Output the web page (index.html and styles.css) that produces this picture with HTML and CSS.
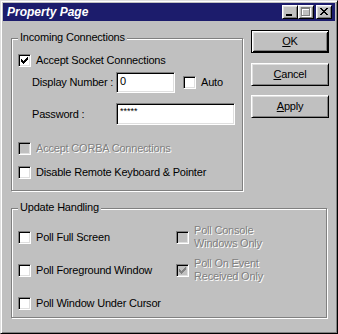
FILE: index.html
```html
<!DOCTYPE html>
<html>
<head>
<meta charset="utf-8">
<link rel="stylesheet" href="styles.css">
</head>
<body>
<div class="window">
  <div class="titlebar">
    <span class="title">Property Page</span>
    <div class="tb-btns">
      <span class="tb-btn"><svg width="14" height="12" viewBox="0 0 14 12" shape-rendering="crispEdges"><rect x="3" y="8" width="6" height="2" fill="#000"/></svg></span>
      <span class="tb-btn"><svg width="14" height="12" viewBox="0 0 14 12" shape-rendering="crispEdges"><g fill="#fff" transform="translate(1,1)"><rect x="2" y="1" width="9" height="2"/><rect x="2" y="1" width="1" height="9"/><rect x="10" y="1" width="1" height="9"/><rect x="2" y="9" width="9" height="1"/></g><g fill="#808080"><rect x="2" y="1" width="9" height="2"/><rect x="2" y="1" width="1" height="9"/><rect x="10" y="1" width="1" height="9"/><rect x="2" y="9" width="9" height="1"/></g></svg></span>
      <span class="tb-btn close"><svg width="14" height="12" viewBox="0 0 14 12" shape-rendering="crispEdges"><path transform="translate(3,2)" fill="#000" d="M0 0h2v1h-2z M6 0h2v1h-2z M1 1h2v1h-2z M5 1h2v1h-2z M2 2h4v1h-4z M3 3h2v1h-2z M2 4h4v1h-4z M1 5h2v1h-2z M5 5h2v1h-2z M0 6h2v1h-2z M6 6h2v1h-2z"/></svg></span>
    </div>
  </div>
  <div class="content">
    <div class="top">
      <div class="group g1">
        <span class="legend">Incoming Connections</span>
        <div class="cb-row">
          <span class="cb"><svg width="7" height="7" viewBox="0 0 7 7" shape-rendering="crispEdges"><path fill="#000" d="M0 2h1v3h-1z M1 3h1v3h-1z M2 4h1v3h-1z M3 3h1v3h-1z M4 2h1v3h-1z M5 1h1v3h-1z M6 0h1v3h-1z"/></svg></span>
          <span>Accept Socket Connections</span>
        </div>
        <div class="field-row r-display">
          <span class="flabel">Display Number :</span>
          <div class="field f-display">0</div>
          <div class="cb-row auto">
            <span class="cb"></span>
            <span>Auto</span>
          </div>
        </div>
        <div class="field-row r-password">
          <span class="flabel">Password :</span>
          <div class="field f-password">*****</div>
        </div>
        <div class="cb-row r-corba disabled">
          <span class="cb"></span>
          <span>Accept CORBA Connections</span>
        </div>
        <div class="cb-row r-disable">
          <span class="cb"></span>
          <span>Disable Remote Keyboard &amp; Pointer</span>
        </div>
      </div>
      <div class="buttons">
        <div class="btn default"><span><u>O</u>K</span></div>
        <div class="btn b-cancel"><span><u>C</u>ancel</span></div>
        <div class="btn b-apply"><span><u>A</u>pply</span></div>
      </div>
    </div>
    <div class="group g2">
      <span class="legend">Update Handling</span>
      <div class="grid">
        <div class="cell">
          <span class="cb"></span>
          <span>Poll Full Screen</span>
        </div>
        <div class="cell disabled">
          <span class="cb"></span>
          <span>Poll Console<br>Windows Only</span>
        </div>
        <div class="cell">
          <span class="cb"></span>
          <span>Poll Foreground Window</span>
        </div>
        <div class="cell disabled">
          <span class="cb"><svg width="7" height="7" viewBox="0 0 7 7" shape-rendering="crispEdges"><path fill="#808080" d="M0 2h1v3h-1z M1 3h1v3h-1z M2 4h1v3h-1z M3 3h1v3h-1z M4 2h1v3h-1z M5 1h1v3h-1z M6 0h1v3h-1z"/></svg></span>
          <span>Poll On Event<br>Received Only</span>
        </div>
        <div class="cell">
          <span class="cb"></span>
          <span>Poll Window Under Cursor</span>
        </div>
      </div>
    </div>
  </div>
</div>
</body>
</html>
```
FILE: styles.css
```css
body {
  margin: 0;
}

.window {
  width: 338px;
  height: 334px;
  box-sizing: border-box;
  background: #c0c0c0;
  border: 1px solid;
  border-color: #dfdfdf #000 #000 #dfdfdf;
  box-shadow: inset 1px 1px #fff, inset -1px -1px #808080;
  padding: 2px;
  font-family: "Liberation Sans", Arial, sans-serif;
  font-size: 11px;
  letter-spacing: -0.2px;
  line-height: 13px;
  color: #000;
  display: flex;
  flex-direction: column;
}

.titlebar {
  height: 18px;
  background: #1c1c6c;
  display: flex;
  align-items: center;
  padding: 0 3px 0 4px;
  color: #fff;
}

.title {
  flex: 1;
  font-style: italic;
  font-weight: bold;
  font-size: 12px;
  letter-spacing: 0;
}

.tb-btns {
  display: flex;
}

.tb-btn {
  width: 16px;
  height: 14px;
  box-sizing: border-box;
  background: #c0c0c0;
  border: 1px solid;
  border-color: #fff #000 #000 #fff;
  box-shadow: inset 1px 1px #dfdfdf, inset -1px -1px #808080;
  display: block;
}

.tb-btn svg {
  display: block;
}

.tb-btn.close {
  margin-left: 2px;
}

.content {
  padding: 0 6px 0 8px;
  display: flex;
  flex-direction: column;
}

.top {
  display: flex;
  align-items: flex-start;
  gap: 8px;
}

.group {
  position: relative;
  border: 1px solid #808080;
  box-shadow: inset 1px 1px #fff, 1px 1px #fff;
  box-sizing: border-box;
}

.legend {
  position: absolute;
  left: 6px;
  top: -8px;
  padding: 0 2px;
  background: #c0c0c0;
  line-height: 13px;
}

.g1 {
  width: 232px;
  height: 153px;
  margin-top: 17px;
  padding: 15px 0 0 6px;
}

.cb-row {
  display: flex;
  align-items: center;
  gap: 5px;
  height: 13px;
}

.cb {
  width: 13px;
  height: 13px;
  box-sizing: border-box;
  flex: none;
  background: #fff;
  border: 1px solid;
  border-color: #808080 #fff #fff #808080;
  box-shadow: inset 1px 1px #000, inset -1px -1px #dfdfdf;
  display: flex;
  align-items: center;
  justify-content: center;
}

.cb svg {
  display: block;
}

.disabled {
  color: #808080;
  text-shadow: 1px 1px #fff;
}

.disabled .cb {
  background: #c0c0c0;
}

.field-row {
  display: flex;
  align-items: center;
}

.flabel {
  width: 84px;
  margin-left: 14px;
  flex: none;
}

.field {
  box-sizing: border-box;
  background: #fff;
  border: 1px solid;
  border-color: #808080 #fff #fff #808080;
  box-shadow: inset 1px 1px #000, inset -1px -1px #dfdfdf;
  padding: 2px 3px;
  line-height: 13px;
}

.r-display {
  margin-top: 5px;
  height: 21px;
}

.f-display {
  width: 59px;
  height: 21px;
}

.auto {
  margin-left: 8px;
}

.r-password {
  margin-top: 10px;
  height: 22px;
}

.f-password {
  width: 119px;
  height: 22px;
  font-size: 9px;
  line-height: 11px;
  letter-spacing: 0;
}

.r-corba {
  margin-top: 17px;
}

.r-disable {
  margin-top: 11px;
}

.buttons {
  margin-top: 9px;
  width: 78px;
  display: flex;
  flex-direction: column;
}

.btn {
  height: 23px;
  box-sizing: border-box;
  display: flex;
  align-items: center;
  justify-content: center;
  border: 1px solid;
  border-color: #fff #000 #000 #fff;
  box-shadow: inset 1px 1px #dfdfdf, inset -1px -1px #808080;
}

.btn.default {
  border: 1px solid #000;
  box-shadow: inset 1px 1px #fff, inset -1px -1px #000, inset 2px 2px #dfdfdf, inset -2px -2px #808080;
}

.b-cancel {
  margin-top: 10px;
}

.b-apply {
  margin-top: 9px;
}

.g2 {
  width: 316px;
  height: 110px;
  margin-top: 17px;
  padding: 15px 0 0 6px;
}

.grid {
  display: grid;
  grid-template-columns: 158px 1fr;
  grid-auto-rows: 26px;
  row-gap: 7px;
}

.cell {
  display: flex;
  align-items: center;
  gap: 5px;
}
```
